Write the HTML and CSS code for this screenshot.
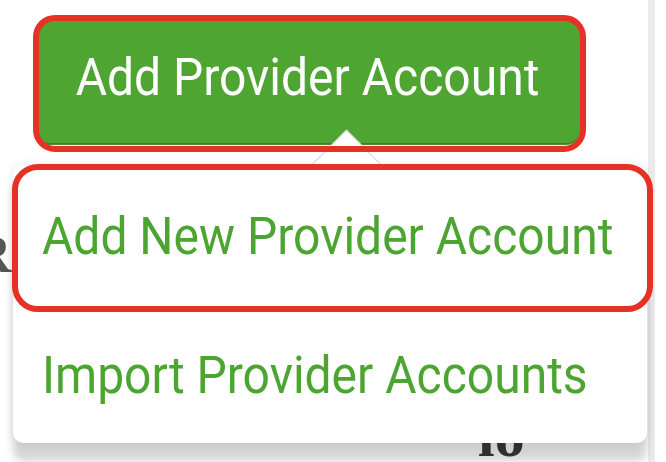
FILE: index.html
```html
<!DOCTYPE html>
<html lang="en">
<head>
    <meta charset="UTF-8" />
    <meta name="viewport" content="width=device-width, initial-scale=1.0"/>
    <title>Add Provider Account</title>
    <link rel="stylesheet" href="styles.css">
</head>
<body>

    <main class="screen">
        <button class="add-btn" type="button"><span class="label">Add Provider Account</span></button>

        <div class="under">
            <p class="under-left">PR</p>
            <p class="under-bottom">lo</p>
        </div>

        <div class="menu">
            <a class="menu-item menu-item-first" href="#"><span class="label">Add New Provider Account</span></a>
            <a class="menu-item" href="#"><span class="label">Import Provider Accounts</span></a>
        </div>

        <!-- annotation boxes -->
        <div class="mark mark-btn"></div>
        <div class="mark mark-item"></div>
    </main>

    <div class="track"></div>

</body>
</html>
```

FILE: styles.css
```css
body {
    margin: 0;
    width: 666px;
    height: 462px;
    overflow: hidden;
    display: flex;
    background: #fff;
    font-family: Roboto, "Liberation Sans", sans-serif;
}

.screen {
    position: relative;
    width: 648px;
    height: 462px;
    flex-shrink: 0;
}

.track {
    width: 7px;
    background: #ebebeb;
}

.label {
    display: inline-block;
    transform: scaleY(1.08);
}

.add-btn {
    display: block;
    margin: 18px 0 0 35px;
    width: 545px;
    height: 125px;
    border: none;
    border-radius: 14px;
    background-color: #4fa532;
    box-shadow: 0 2px 1px #3c7f25;
    color: #fff;
    font-family: inherit;
    font-size: 48px;
    padding: 0 0 6px 0;
}

.under {
    display: flex;
    flex-direction: column;
}

.under p {
    margin: 0;
    font-family: "Liberation Serif", serif;
    font-weight: bold;
    color: #555;
}

.under-left {
    font-size: 52px;
    margin-top: 82px !important;
    margin-left: -58px !important;
}

.under-bottom {
    font-size: 60px;
    color: #3a3a3a !important;
    margin-top: 118px !important;
    margin-left: 478px !important;
}

.menu {
    position: absolute;
    left: 13px;
    top: 165px;
    width: 634px;
    height: 278px;
    background: #fff;
    border-radius: 10px;
    box-shadow: 0 18px 8px rgba(0, 0, 0, 0.17), 0 0 10px rgba(0, 0, 0, 0.1);
    display: flex;
    flex-direction: column;
}

.menu::before {
    content: "";
    position: absolute;
    left: 308px;
    top: -25px;
    width: 50px;
    height: 50px;
    background: #fff;
    border-top: 1px solid #d6d6d6;
    border-left: 1px solid #d6d6d6;
    transform: rotate(45deg);
}

.menu-item {
    position: relative;
    display: flex;
    align-items: center;
    padding-left: 29px;
    color: #4ba530;
    font-size: 48px;
    text-decoration: none;
    flex: 1;
}

.menu-item-first {
    flex: 0 0 142px;
}

.mark {
    position: absolute;
    border: 6px solid #e63226;
    box-sizing: border-box;
}

.mark-btn {
    left: 33px;
    top: 15px;
    width: 553px;
    height: 137px;
    border-radius: 22px;
}

.mark-item {
    left: 12px;
    top: 164px;
    width: 641px;
    height: 148px;
    border-radius: 26px;
}
```
